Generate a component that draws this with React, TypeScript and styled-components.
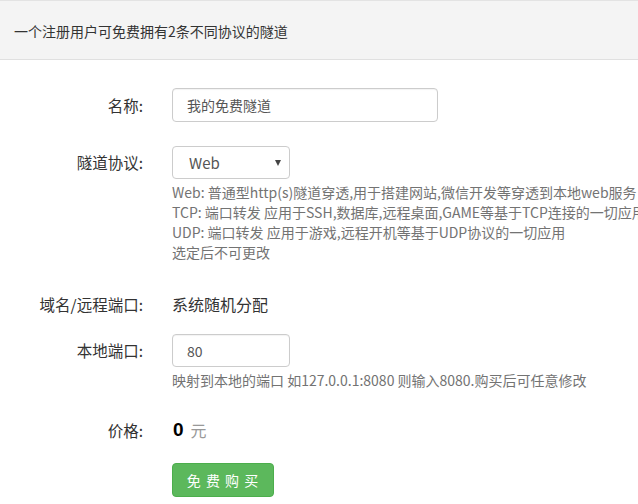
import React from "react";
import styled, { createGlobalStyle } from "styled-components";

const Global = createGlobalStyle`
  html, body { margin: 0; padding: 0; background: #fff; }
  body {
    font-family: "Noto Sans CJK SC", "Noto Sans", sans-serif;
    color: #333;
    font-size: 14px;
    overflow: hidden;
  }
  * { box-sizing: border-box; }
`;

const Panel = styled.div`
  width: 638px;
  border-top: 1px solid #e3e3e3;
`;

const Heading = styled.div`
  height: 59px;
  background: #f4f4f4;
  border-bottom: 1px solid #e0e0e0;
  padding: 0 14px;
  display: flex;
  align-items: center;
  padding-top: 2px;
  font-size: 14px;
  color: #333;
  white-space: nowrap;
`;

const Form = styled.div`
  display: flex;
  flex-direction: column;
  padding-top: 28px;
`;

const Row = styled.div<{ $mt?: number }>`
  display: flex;
  align-items: flex-start;
  margin-top: ${(p) => p.$mt ?? 0}px;
`;

const Label = styled.div<{ $h?: number }>`
  width: 143px;
  flex: none;
  text-align: right;
  font-size: 15.5px;
  color: #333;
  height: ${(p) => p.$h ?? 34}px;
  line-height: ${(p) => p.$h ?? 34}px;
  margin-right: 29px;
  white-space: nowrap;
`;

const Field = styled.div`
  display: flex;
  flex-direction: column;
  min-width: 0;
  flex: 1;
`;

const Input = styled.input<{ $w: number; $h?: number }>`
  width: ${(p) => p.$w}px;
  height: ${(p) => p.$h ?? 34}px;
  border: 1px solid #ccc;
  border-radius: 4px;
  padding: 0 14px;
  font-family: inherit;
  font-size: 14px;
  color: #555;
  outline: none;
  box-shadow: inset 0 1px 1px rgba(0, 0, 0, 0.05);
`;

const SelectWrap = styled.div`
  position: relative;
  width: 118px;
  height: 33px;
`;

const Select = styled.select`
  appearance: none;
  -webkit-appearance: none;
  width: 100%;
  height: 100%;
  border: 1px solid #ccc;
  border-radius: 4px;
  padding: 0 16px;
  font-family: inherit;
  font-size: 15px;
  color: #555;
  background: #fff;
  outline: none;
`;

const Caret = styled.span`
  position: absolute;
  right: 9px;
  top: 14px;
  width: 0;
  height: 0;
  border-left: 3.5px solid transparent;
  border-right: 3.5px solid transparent;
  border-top: 6px solid #444;
  pointer-events: none;
`;

const Help = styled.div`
  margin-top: 3px;
  font-size: 14px;
  line-height: 20px;
  color: #737373;
  white-space: nowrap;
`;

const Static = styled.div`
  font-size: 16px;
  height: 34px;
  line-height: 34px;
  color: #333;
`;

const Price = styled.div`
  height: 34px;
  display: flex;
  align-items: center;
  gap: 7px;
  margin-left: 1px;
`;

const Amount = styled.span`
  font-family: "Liberation Sans", Arial, sans-serif;
  font-weight: bold;
  font-size: 19px;
  color: #000;
`;

const Unit = styled.span`
  font-size: 16px;
  color: #999;
`;

const Button = styled.button`
  width: 102px;
  height: 34px;
  border: 1px solid #4cae4c;
  border-radius: 4px;
  background: #5cb85c;
  color: #fff;
  font-family: inherit;
  font-size: 14px;
  letter-spacing: 1px;
  padding: 0;
  cursor: pointer;
`;

export default function App() {
  return (
    <>
      <Global />
      <Panel>
        <Heading>一个注册用户可免费拥有2条不同协议的隧道</Heading>
        <Form>
          <Row>
            <Label>名称:</Label>
            <Field>
              <Input $w={266} defaultValue="我的免费隧道" />
            </Field>
          </Row>
          <Row $mt={24}>
            <Label $h={33}>隧道协议:</Label>
            <Field>
              <SelectWrap>
                <Select defaultValue="web">
                  <option value="web">Web</option>
                  <option value="tcp">TCP</option>
                  <option value="udp">UDP</option>
                </Select>
                <Caret />
              </SelectWrap>
              <Help>
                <div>Web: 普通型http(s)隧道穿透,用于搭建网站,微信开发等穿透到本地web服务</div>
                <div>TCP: 端口转发 应用于SSH,数据库,远程桌面,GAME等基于TCP连接的一切应用</div>
                <div>UDP: 端口转发 应用于游戏,远程开机等基于UDP协议的一切应用</div>
                <div>选定后不可更改</div>
              </Help>
            </Field>
          </Row>
          <Row $mt={25}>
            <Label>域名/远程端口:</Label>
            <Field>
              <Static>系统随机分配</Static>
            </Field>
          </Row>
          <Row $mt={13}>
            <Label $h={33}>本地端口:</Label>
            <Field>
              <Input $w={118} $h={33} defaultValue="80" />
              <Help>映射到本地的端口 如127.0.0.1:8080 则输入8080.购买后可任意修改</Help>
            </Field>
          </Row>
          <Row $mt={23}>
            <Label>价格:</Label>
            <Field>
              <Price>
                <Amount>0</Amount>
                <Unit>元</Unit>
              </Price>
            </Field>
          </Row>
          <Row $mt={16}>
            <Label />
            <Field>
              <Button>免 费 购 买</Button>
            </Field>
          </Row>
        </Form>
      </Panel>
    </>
  );
}
